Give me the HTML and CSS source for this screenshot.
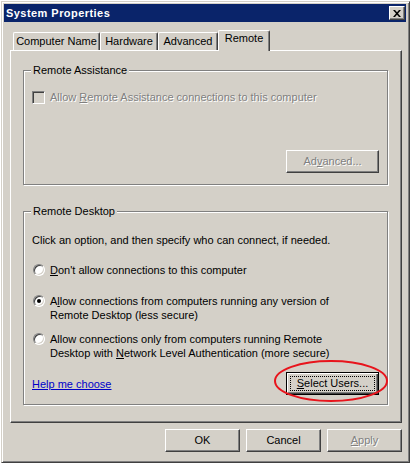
FILE: index.html
```html
<!DOCTYPE html>
<html lang="en">
<head>
    <meta charset="UTF-8">
    <meta name="viewport" content="width=device-width, initial-scale=1.0">
    <title>System Properties</title>
    <link rel="stylesheet" href="styles.css">
</head>
<body>
    <div class="window">
        <!-- Title Bar -->
        <div class="titlebar">
            <span class="title">System Properties</span>
            <button class="close-btn" aria-label="Close">
                <svg width="8" height="7" viewBox="0 0 8 7"><path d="M0 0h2l2 2.3 2-2.3h2l-3 3.5 3 3.5h-2l-2-2.3-2 2.3h-2l3-3.5z" fill="#000"/></svg>
            </button>
        </div>

        <!-- Tabs -->
        <div class="tabs">
            <div class="tab tab-name">Computer Name</div>
            <div class="tab tab-hw">Hardware</div>
            <div class="tab tab-adv">Advanced</div>
            <div class="tab tab-remote active">Remote</div>
        </div>

        <div class="panel">
            <!-- Remote Assistance -->
            <fieldset class="group group-assist">
                <legend>Remote Assistance</legend>
                <div class="check-row">
                    <span class="checkbox"></span>
                    <span class="dis-text">Allow <u>R</u>emote Assistance connections to this computer</span>
                </div>
                <div class="btn-row">
                    <button class="btn btn-wide disabled"><span class="dis-text">Ad<u>v</u>anced...</span></button>
                </div>
            </fieldset>

            <!-- Remote Desktop -->
            <fieldset class="group group-desktop">
                <legend>Remote Desktop</legend>
                <p class="intro">Click an option, and then specify who can connect, if needed.</p>
                <div class="radio radio-none">
                    <span class="radio-dot"></span>
                    <span><u>D</u>on't allow connections to this computer</span>
                </div>
                <div class="radio radio-any">
                    <span class="radio-dot checked"></span>
                    <span>A<u>l</u>low connections from computers running any version of<br>Remote Desktop (less secure)</span>
                </div>
                <div class="radio radio-nla">
                    <span class="radio-dot"></span>
                    <span>Allow connections only from computers running Remote<br>Desktop with <u>N</u>etwork Level Authentication (more secure)</span>
                </div>
                <div class="desk-foot">
                    <a href="#" class="link">Help me choose</a>
                    <div class="marked">
                        <button class="btn btn-wide default"><span class="focus-box"><u>S</u>elect Users...</span></button>
                        <svg class="ring" width="116" height="44" viewBox="0 0 116 44"><ellipse cx="57" cy="21" rx="56" ry="20" fill="none" stroke="#e8141c" stroke-width="2"/></svg>
                    </div>
                </div>
            </fieldset>
        </div>

        <!-- Dialog Buttons -->
        <div class="actions">
            <button class="btn">OK</button>
            <button class="btn">Cancel</button>
            <button class="btn disabled"><span class="dis-text"><u>A</u>pply</span></button>
        </div>
    </div>
</body>
</html>
```

FILE: styles.css
```css
/* General Styles */
* {
    box-sizing: border-box;
}
body {
    margin: 0;
    background-color: #ffffff;
    font-family: "Liberation Sans", Arial, sans-serif;
    font-size: 11px;
    line-height: 14px;
    color: #000;
}
u {
    text-decoration: underline;
    text-underline-offset: 1px;
}

/* Window Frame */
.window {
    margin: 1px 0 0 1px;
    width: 409px;
    height: 462px;
    padding: 2px 3px 2px 2px;
    background-color: #d4d0c8;
    border: 1px solid;
    border-color: #d4d0c8 #404040 #404040 #d4d0c8;
    box-shadow: inset 1px 1px #fff, inset -1px -1px #808080;
}

/* Title Bar */
.titlebar {
    height: 18px;
    padding: 0 1px 0 2px;
    display: flex;
    align-items: center;
    justify-content: space-between;
    background-color: #0a246a;
}
.title {
    color: #fff;
    font-weight: bold;
    letter-spacing: 0.45px;
}
.close-btn {
    width: 16px;
    height: 14px;
    padding: 0;
    display: flex;
    align-items: center;
    justify-content: center;
    background-color: #d4d0c8;
    border: 1px solid;
    border-color: #fff #404040 #404040 #fff;
    box-shadow: inset -1px -1px #808080;
}

/* Tabs */
.tabs {
    height: 20px;
    margin-top: 8px;
    padding-left: 9px;
    display: flex;
    align-items: flex-end;
}
.tab {
    height: 18px;
    padding-top: 2px;
    text-align: center;
    line-height: 13px;
    border-top: 1px solid #fff;
    border-left: 1px solid #fff;
    border-right: 1px solid #404040;
    border-radius: 2px 2px 0 0;
    box-shadow: inset -1px 0 #808080;
    background-color: #d4d0c8;
}
.tab-name { width: 87px; }
.tab-hw { width: 58px; }
.tab-adv { width: 60px; }
.tab-remote { width: 52px; }
.tab.active {
    position: relative;
    z-index: 1;
    height: 21px;
    margin-bottom: -1px;
    padding-top: 1px;
}

/* Tab Panel */
.panel {
    height: 373px;
    margin: 0 4px 0 6px;
    border: 1px solid;
    border-color: #fff #404040 #404040 #fff;
    box-shadow: inset -1px -1px #808080;
}

/* Group Boxes */
.group {
    margin: 0 13px 0 12px;
    padding: 0 8px;
    border: 1px solid #808080;
    box-shadow: 1px 1px 0 #fff, inset 1px 1px 0 #fff;
}
.group legend {
    margin-left: -1px;
    padding: 0 2px;
    line-height: 13px;
    background-color: #d4d0c8;
}
.group-assist {
    margin-top: 13px;
    padding-top: 13px;
    padding-bottom: 11px;
}
.group-desktop {
    margin-top: 20px;
    padding-top: 15px;
    padding-bottom: 9px;
}

/* Checkbox */
.check-row {
    display: flex;
    align-items: center;
    gap: 5px;
}
.checkbox {
    width: 13px;
    height: 13px;
    border: 1px solid;
    border-color: #808080 #fff #fff #808080;
    box-shadow: inset 1px 1px #404040, inset -1px -1px #d4d0c8;
    background-color: #d4d0c8;
}
.dis-text {
    color: #808080;
    text-shadow: 1px 1px 0 #fff;
}

/* Buttons */
.btn {
    width: 75px;
    height: 23px;
    padding: 0;
    font: inherit;
    line-height: 13px;
    color: #000;
    background-color: #d4d0c8;
    border: 1px solid;
    border-color: #fff #404040 #404040 #fff;
    box-shadow: inset -1px -1px #808080;
}
.btn-wide {
    width: 93px;
}
.btn-row {
    margin-top: 46px;
    display: flex;
    justify-content: flex-end;
}
.btn.default {
    display: flex;
    padding: 3px;
    border: 1px solid #000;
    box-shadow: inset 1px 1px #fff, inset -1px -1px #404040, inset -2px -2px #808080;
}
.focus-box {
    flex: 1;
    display: flex;
    align-items: center;
    justify-content: center;
    border: 1px dotted #000;
}

/* Remote Desktop Options */
.intro {
    margin: 0;
}
.radio {
    display: flex;
    align-items: flex-start;
    gap: 5px;
}
.radio-none { margin-top: 16px; }
.radio-any { margin-top: 17px; }
.radio-nla { margin-top: 10px; }
.radio-dot {
    width: 12px;
    height: 12px;
    margin: 1px 0 0 1px;
    flex-shrink: 0;
    display: flex;
    align-items: center;
    justify-content: center;
    border-radius: 50%;
    border: 1px solid;
    border-color: #808080 #fff #fff #808080;
    box-shadow: inset 1px 1px #404040, inset -1px -1px #d4d0c8;
    background-color: #fff;
}
.radio-dot.checked::after {
    content: "";
    width: 4px;
    height: 4px;
    border-radius: 50%;
    background-color: #000;
}

.desk-foot {
    margin-top: 12px;
    display: flex;
    align-items: center;
    justify-content: space-between;
}
.link {
    color: #0000c8;
    text-decoration: underline;
}
.marked {
    position: relative;
}
.ring {
    position: absolute;
    left: -12px;
    top: -12px;
    pointer-events: none;
    overflow: visible;
}

/* Dialog Actions */
.actions {
    margin-top: 6px;
    padding-right: 4px;
    display: flex;
    justify-content: flex-end;
    gap: 6px;
}
```
